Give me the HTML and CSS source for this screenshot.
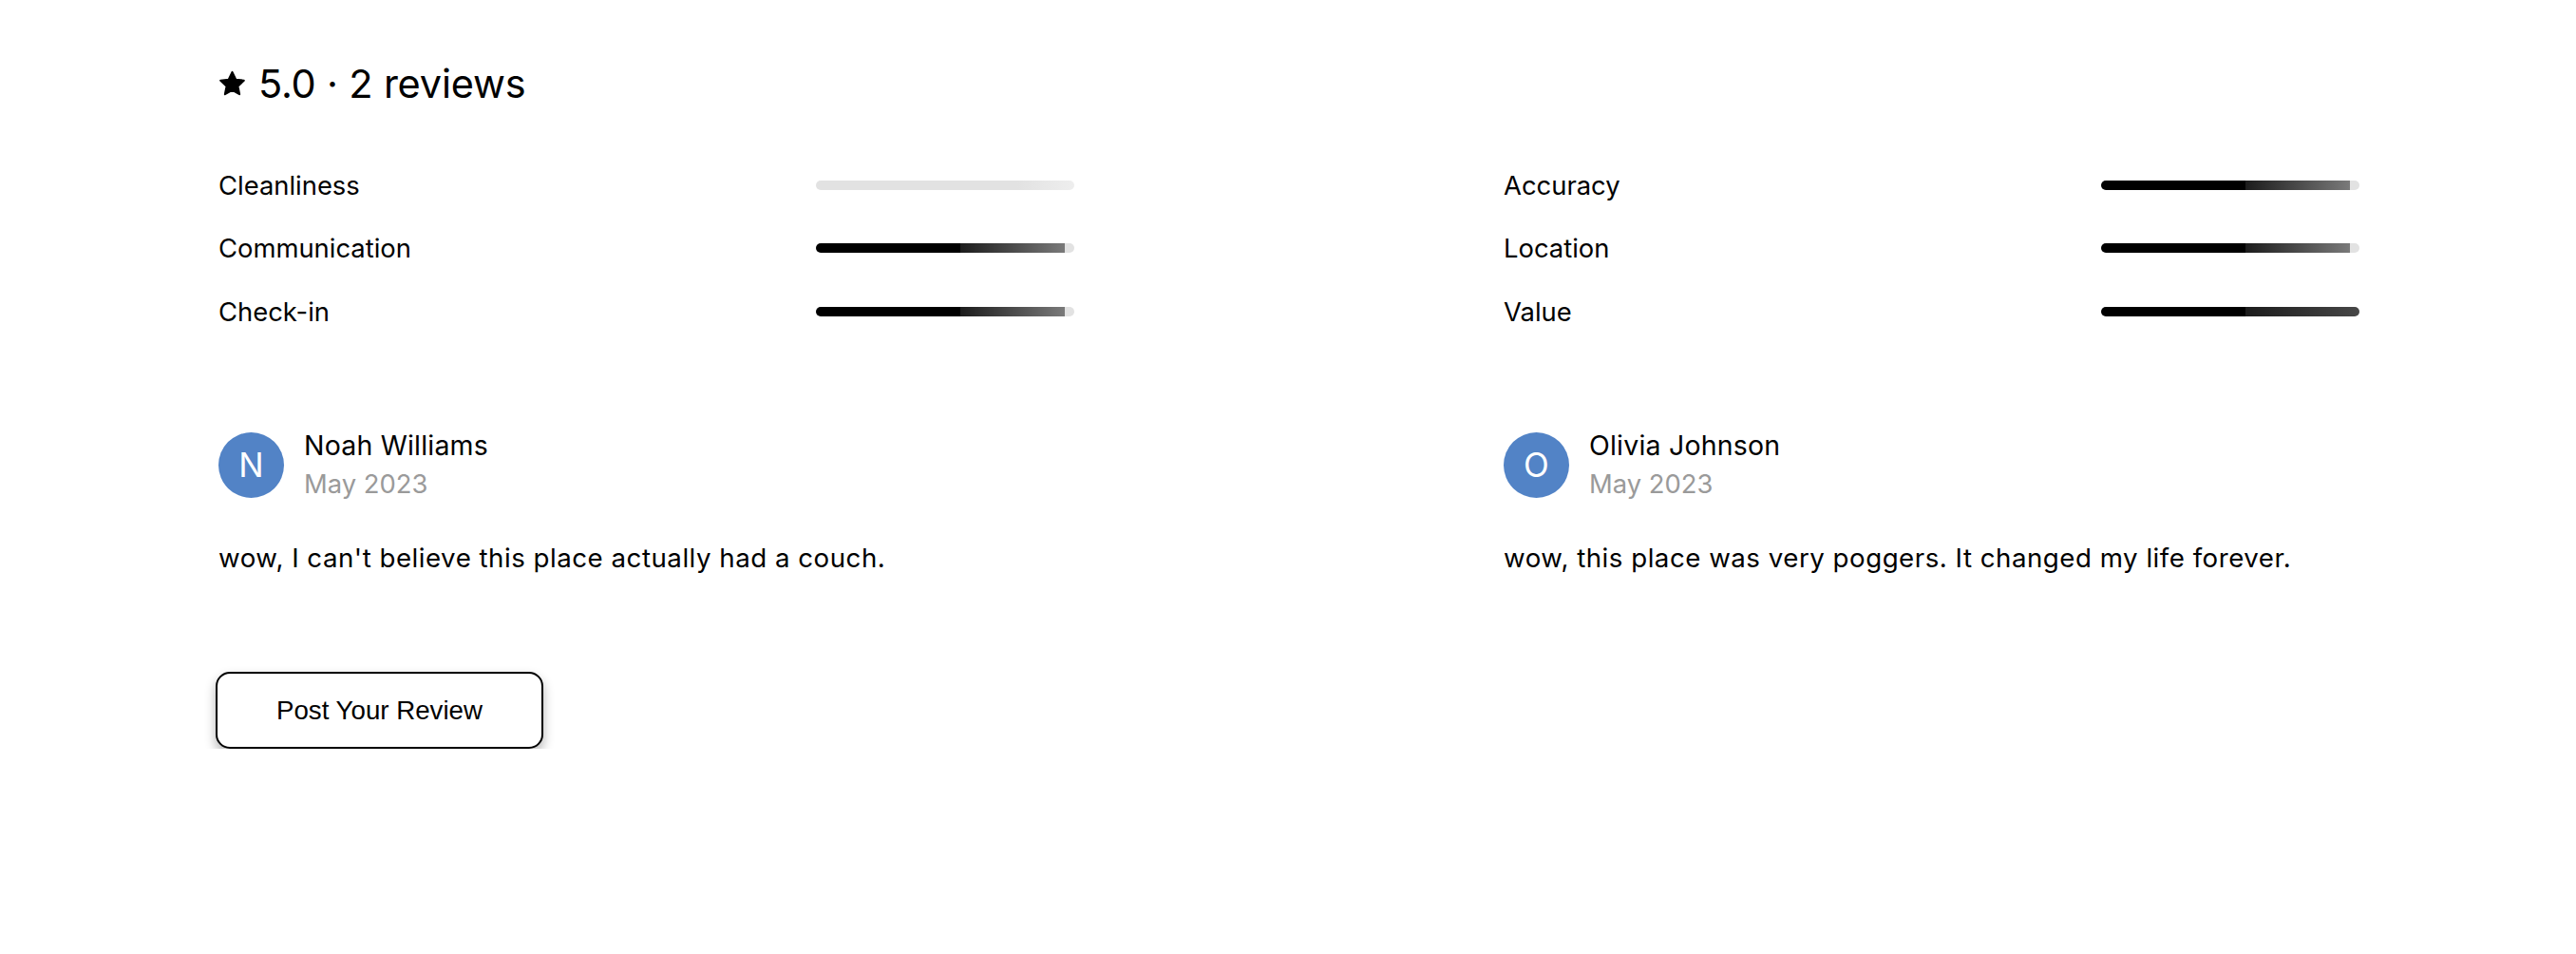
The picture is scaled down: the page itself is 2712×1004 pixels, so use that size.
FILE: index.html
```html
<!DOCTYPE html>
<html lang="en">
<head>
<meta charset="utf-8">
<title>Reviews</title>
<link rel="stylesheet" href="styles.css">
</head>
<body>
<main class="reviews">
  <h2 class="summary">
    <svg class="star" viewBox="0 0 24 24" aria-hidden="true"><path d="M12 2.2l2.9 6.1 6.6.8-4.9 4.6 1.3 6.6L12 17l-5.9 3.3 1.3-6.6-4.9-4.6 6.6-.8z" fill="#000" stroke="#000" stroke-width="1.6" stroke-linejoin="round"/></svg>
    <span>5.0 · 2 reviews</span>
  </h2>

  <section class="ratings">
    <div class="rating-col">
      <div class="rating-row"><span class="label">Cleanliness</span><span class="bar bar-empty"></span></div>
      <div class="rating-row"><span class="label">Communication</span><span class="bar bar-partial"></span></div>
      <div class="rating-row"><span class="label">Check-in</span><span class="bar bar-partial"></span></div>
    </div>
    <div class="rating-col">
      <div class="rating-row"><span class="label">Accuracy</span><span class="bar bar-partial"></span></div>
      <div class="rating-row"><span class="label">Location</span><span class="bar bar-partial"></span></div>
      <div class="rating-row"><span class="label">Value</span><span class="bar bar-full"></span></div>
    </div>
  </section>

  <section class="review-list">
    <article class="review">
      <header class="review-head">
        <div class="avatar">N</div>
        <div class="who">
          <div class="name">Noah Williams</div>
          <div class="date">May 2023</div>
        </div>
      </header>
      <p class="text">wow, I can't believe this place actually had a couch.</p>
    </article>
    <article class="review">
      <header class="review-head">
        <div class="avatar">O</div>
        <div class="who">
          <div class="name">Olivia Johnson</div>
          <div class="date">May 2023</div>
        </div>
      </header>
      <p class="text">wow, this place was very poggers. It changed my life forever.</p>
    </article>
  </section>

  <button class="post-btn" type="button">Post Your Review</button>
</main>
</body>
</html>
```

FILE: styles.css
```css
html, body {
  margin: 0;
  padding: 0;
  background: #fff;
}

body {
  font-family: "Inter", "Liberation Sans", sans-serif;
  color: #000;
}

.reviews {
  padding: 61px 228px 0 228px;
}

.summary {
  display: flex;
  align-items: center;
  gap: 12px;
  margin: 0;
  font-size: 41.5px;
  line-height: 54px;
  font-weight: 400;
  letter-spacing: -0.2px;
}

.star {
  width: 31px;
  height: 31px;
  flex: none;
  margin-left: 1px;
}

.ratings {
  display: grid;
  grid-template-columns: 1fr 1fr;
  column-gap: 450px;
  margin-top: 59px;
}

.rating-col {
  display: flex;
  flex-direction: column;
  gap: 25px;
}

.rating-row {
  display: flex;
  align-items: center;
  justify-content: space-between;
  height: 41.5px;
  font-size: 27.4px;
}

.label {
  padding-left: 2px;
}

.bar {
  width: 272px;
  height: 10px;
  border-radius: 5px;
  background: #e2e2e2;
}

.bar-empty {
  background: linear-gradient(to right, #e2e2e2 78%, #eeeeee 100%);
}

.bar-partial {
  background:
    linear-gradient(to right, #000 0, #000 56%, #1c1c1c 56%, #7a7a7a 96.5%, #e2e2e2 96.5%, #e2e2e2 100%);
}

.bar-full {
  background: linear-gradient(to right, #000 0, #000 56%, #1c1c1c 56%, #474747 100%);
}

.review-list {
  display: grid;
  grid-template-columns: 1fr 1fr;
  column-gap: 450px;
  margin-top: 99px;
}

.review-head {
  display: flex;
  align-items: center;
  gap: 21px;
  padding-left: 2px;
}

.avatar {
  width: 69px;
  height: 69px;
  border-radius: 50%;
  background: #5283c6;
  color: #fff;
  display: flex;
  align-items: center;
  justify-content: center;
  font-size: 35px;
  flex: none;
}

.who {
  display: flex;
  flex-direction: column;
}

.name {
  font-size: 28.5px;
  line-height: 41.5px;
  letter-spacing: 0.2px;
}

.date {
  font-size: 27.4px;
  line-height: 41.5px;
  color: #9a9a9a;
}

.text {
  margin: 36px 0 0 0;
  padding-left: 2px;
  font-size: 27.7px;
  line-height: 41.5px;
  letter-spacing: 0.5px;
}

.post-btn {
  margin-top: 99px;
  width: 345px;
  height: 81px;
  margin-left: -1px;
  background: #fff;
  border: 2px solid #000;
  border-radius: 15px;
  box-shadow: 0 6px 12px rgba(0, 0, 0, 0.3);
  font-family: "Liberation Sans", Arial, sans-serif;
  font-size: 27.7px;
  color: #000;
  cursor: pointer;
}
```
